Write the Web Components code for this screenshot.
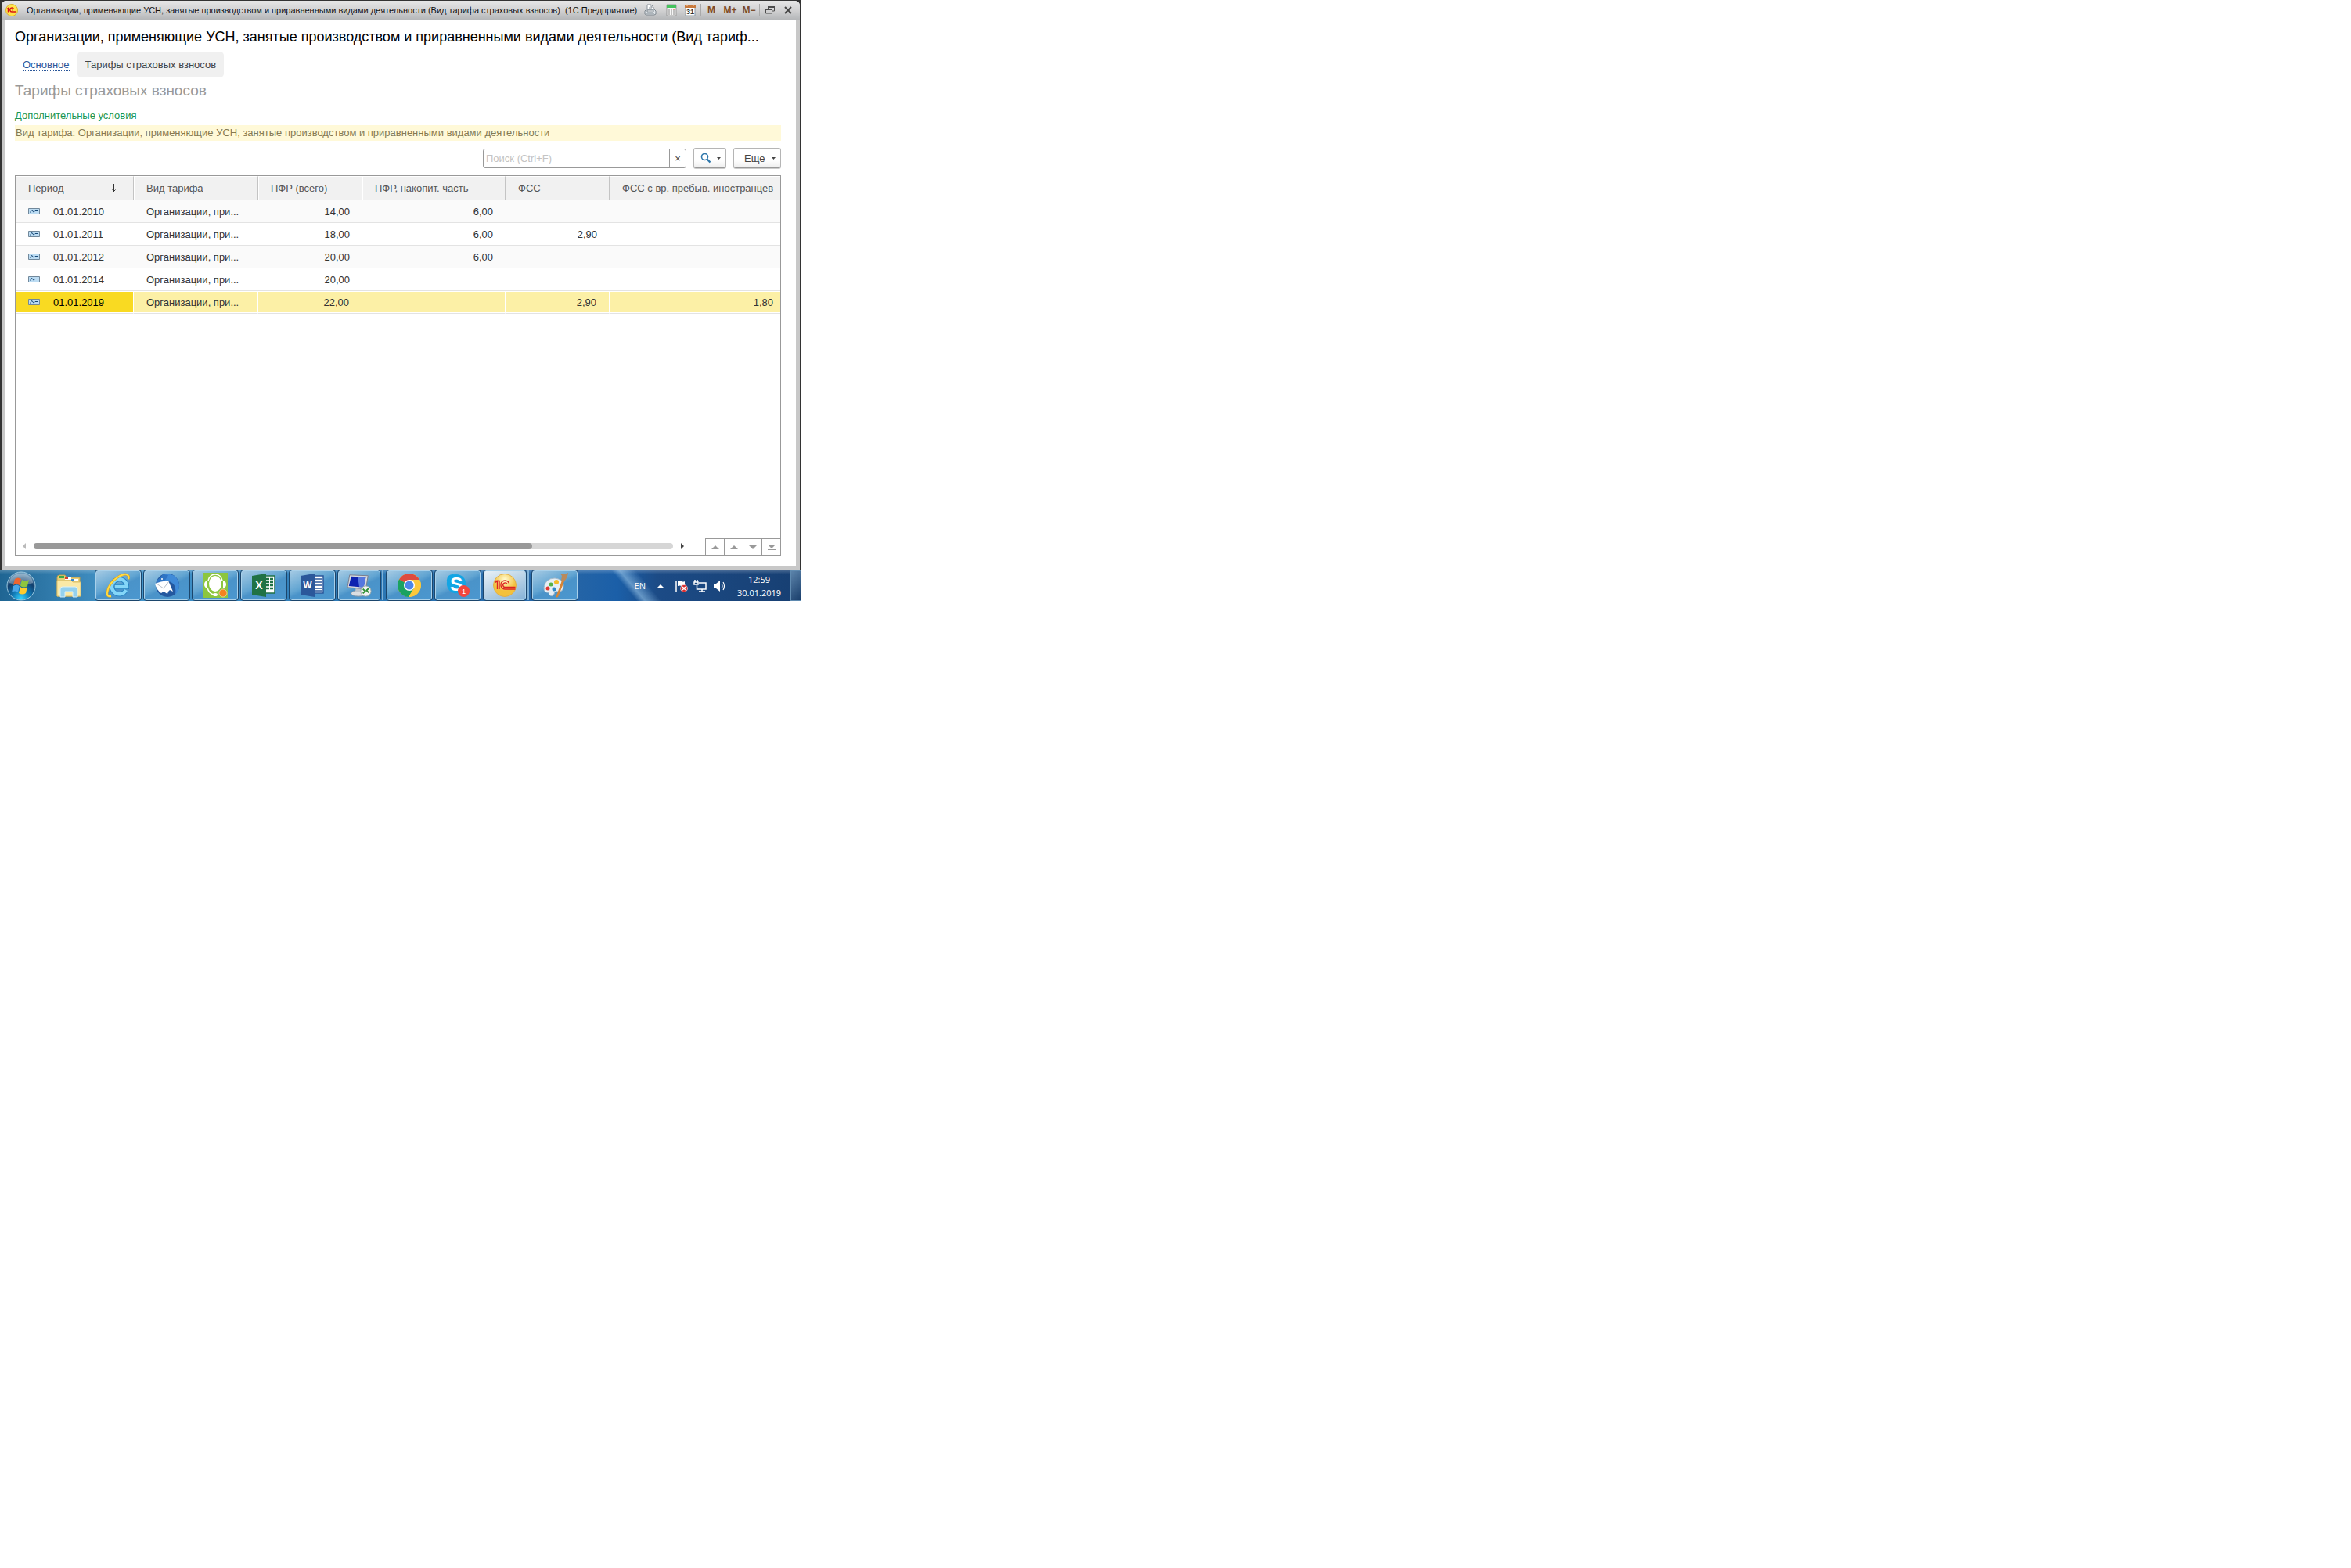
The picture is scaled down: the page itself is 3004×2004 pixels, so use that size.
<!DOCTYPE html>
<html lang="ru">
<head>
<meta charset="utf-8">
<title>Тарифы страховых взносов</title>
<style>
  body {
    margin: 0;
    background: #fff;
    font-family: "Liberation Sans", Arial, sans-serif;
    font-size: 13px;
    color: #333;
  }
</style>
</head>
<body>
<desk-top>
  <app-window caption="Организации, применяющие УСН, занятые производством и приравненными видами деятельности (Вид тарифа страховых взносов)  (1С:Предприятие)">
    <tariff-form></tariff-form>
  </app-window>
  <task-bar slot="taskbar">
    <task-button icon="ie" label="Internet Explorer"></task-button>
    <task-button icon="mail" label="Thunderbird"></task-button>
    <task-button icon="headset" label="Agent"></task-button>
    <task-button icon="excel" label="Excel"></task-button>
    <task-button icon="word" label="Word"></task-button>
    <task-button icon="remote" label="Remote Desktop" stacked></task-button>
    <task-button icon="chrome" label="Chrome"></task-button>
    <task-button icon="skype" label="Skype"></task-button>
    <task-button icon="onec" label="1C" active stacked></task-button>
    <task-button icon="paint" label="Paint"></task-button>
    <system-tray slot="tray"></system-tray>
  </task-bar>
</desk-top>

<script>
const icons = {
  logo: `<svg width="16" height="16" viewBox="0 0 16 16"><circle cx="8" cy="8" r="7.5" fill="#ffe34d" stroke="#d9b52c"/><path d="M2 6.500 3.500 5.500V10.500M4 5v5.500M10.500 6.500A2.500 2.500 0 1 0 8.500 10H13.500M10 8H8.500" fill="none" stroke="#d81414" stroke-width="1.5"/></svg>`,
  printer: `<svg width="16" height="16" viewBox="0 0 16 16"><path d="M4 8V1h5l3 3v4" fill="#fff" stroke="#8b939b"/><path d="M9 1v3h3M6 5h4" fill="none" stroke="#8b939b"/><path d="M1 9l2-2h10l2 2v4l-2 1H3l-2-1z" fill="#dfe4e8" stroke="#7d868e"/><path d="M4 8h8v2H4zM3 12h10" fill="#fff" stroke="#7d868e"/></svg>`,
  calc: `<svg width="14" height="16" viewBox="0 0 14 16"><path d="M1 1h12v14H1z" fill="#f5f5f5" stroke="#999"/><path d="M1 1h12v4H1z" fill="#45c25c"/><path d="M3 7h2M6 7h2M3 9h2M6 9h2M3 11h2M6 11h2M3 13h2M6 13h2M9 9h2M9 11h2M9 13h2" stroke="#888"/><path d="M9 7h2" stroke="#d33"/></svg>`,
  calendar: `<svg width="14" height="16" viewBox="0 0 14 16"><path d="M1 3h12v12H1z" fill="#fff" stroke="#8f9aa5"/><path d="M0 1h14v4H0z" fill="#c8793c"/><path d="M3 0v3M11 0v3" stroke="#f3d6bd" stroke-width="1"/><text x="7" y="13" text-anchor="middle" font-size="9" fill="#333" font-family="Liberation Sans">31</text></svg>`,
  restore: `<svg width="12" height="12" viewBox="0 0 12 12" fill="none" stroke="#4c4c4c"><path d="M3.5 4V2h8v5H9M.5 5h8v5h-8z"/><path d="M3 2h9M0 5h9" stroke-width="2"/></svg>`,
  close: `<svg width="10" height="10" viewBox="0 0 10 10"><path d="M1 1l8 8M9 1 1 9" stroke="#444" stroke-width="2"/></svg>`,
  lens: `<svg width="14" height="14" viewBox="0 0 14 14" fill="none" stroke="#2f77ab"><circle cx="5.5" cy="5.5" r="4" stroke-width="1.6"/><path d="M8.5 8.5 12.5 12.5" stroke-width="2.4"/></svg>`,
  caret: `<svg width="5" height="4" viewBox="0 0 5 4"><path d="M0 1h5L2.500 4z" fill="#444"/></svg>`,
  record: `<svg width="15" height="8" viewBox="0 0 15 8"><path d="M.5.5h14v7H.5z" fill="#bcdcf3" stroke="#71889b"/><path d="M2.500 5.500 4 3Q5 1.500 6 4T8 4.500L9 3.500H12" fill="none" stroke="#174a78"/></svg>`,
  sort: `<svg width="7" height="11" viewBox="0 0 7 11"><path d="M3.500 0v10M1.500 7.500 3.500 9.500 5.500 7.500" fill="none" stroke="#333"/></svg>`,
  first: `<svg width="10" height="7" viewBox="0 0 10 7" fill="#999"><path d="M0 0h10v1H0zM5 1l5 5H0z"/></svg>`,
  up: `<svg width="10" height="5" viewBox="0 0 10 5"><path d="M5 0l5 5H0z" fill="#999"/></svg>`,
  down: `<svg width="10" height="5" viewBox="0 0 10 5"><path d="M0 0h10L5 5z" fill="#999"/></svg>`,
  last: `<svg width="10" height="7" viewBox="0 0 10 7" fill="#999"><path d="M0 0h10L5 5zM0 6h10v1H0z"/></svg>`,
  start: `<svg width="38" height="38" viewBox="0 0 38 38"><defs><radialGradient id="o" cx=".5" cy=".95" r=".9"><stop offset="0" stop-color="#35d4ff"/><stop offset=".35" stop-color="#1179b5"/><stop offset=".7" stop-color="#123f6d"/><stop offset="1" stop-color="#6f9dbd"/></radialGradient></defs><circle cx="19" cy="19" r="18" fill="url(#o)" stroke="#9cc9e0"/><path d="M4 15a15 12 0 0 1 30 0q-15 6-30 0" fill="#fff" opacity=".3"/><path d="M11 10q4-3 8 0l-2 8q-4-3-8 0z" fill="#f0652f"/><path d="M20 11q4 3 9 0l-2 8q-4 3-9 0z" fill="#8fc63e"/><path d="M9 19q4-3 8 0l-2 8q-4-3-8 0z" fill="#4ba6e8"/><path d="M18 20q4 3 9 0l-2 8q-4 3-9 0z" fill="#ffcb2e"/></svg>`,
  folder: `<svg width="34" height="32" viewBox="0 0 34 32"><path d="M2 5q0-3 3-3h7l2 3h17v24H2z" fill="#e8cf78" stroke="#b99c4a"/><path d="M5 3h6v3H5z" fill="#3ca84a"/><path d="M12 5h8v3h-8z" fill="#fff"/><path d="M12 5h4v2h-4z" fill="#d5402e"/><path d="M20 7h9v3h-9z" fill="#fff"/><path d="M20 7h4v2h-4z" fill="#3588d0"/><path d="M2 9h18l2 2h10v18H2z" fill="#fae9a6" stroke="#d9bf6c"/><path d="M6 30V20q0-3 3-3h16q3 0 3 3v10h-6v-7H12v7z" fill="#8fd0f2" stroke="#d9f2ff" opacity=".95"/></svg>`,
  ie: `<svg width="32" height="32" viewBox="0 0 32 32"><path d="M26 22A9.500 9.500 0 1 1 27 18H12" fill="none" stroke="#1e7dbd" stroke-width="6"/><path d="M26 22A9.500 9.500 0 1 1 27 18H12" fill="none" stroke="#84d6f8" stroke-width="4.500"/><path d="M7 30Q1 31 2 25 4 13 15 6 26-1 29 4q1 2 0 4" fill="none" stroke="#e3a51b" stroke-width="3"/><path d="M7 30Q1 31 2 25 4 13 15 6 26-1 29 4q1 2 0 4" fill="none" stroke="#ffdc43" stroke-width="1.800"/></svg>`,
  mail: `<svg width="34" height="34" viewBox="0 0 34 34"><circle cx="18" cy="17" r="15" fill="#24589f"/><path d="M9 8q5-7 13-5 9 2 11 13 0 8-5 13 2-14-8-17L6 15q0-4 3-7z" fill="#3f8ad8"/><path d="M12 3q-4 6-8 7l1 4 6-1q5-2 8-9z" fill="#2f74c4"/><path d="M2 15q7-3 17-4l6 14-4-2q-3 2-3 5l-5-3-3 2q-6-4-8-12z" fill="#fff"/><path d="M4 15l9 6 7-9" fill="none" stroke="#b5bec8"/><circle cx="11" cy="9" r="1" fill="#fff"/></svg>`,
  headset: `<svg width="32" height="32" viewBox="0 0 32 32"><path d="M0 0h32v32H0z" fill="#8cc63f"/><ellipse cx="16" cy="14" rx="8" ry="10" fill="#fff"/><path d="M6 10q-4 1-4 5t4 5zM26 10q4 1 4 5t-4 5z" fill="#fff"/><path d="M7 10Q9 2 16 2t9 8M6 19q2 9 10 9" fill="none" stroke="#fff" stroke-width="1.500"/><ellipse cx="16" cy="28" rx="3" ry="2" fill="#fff"/><circle cx="26" cy="26" r="5" fill="#f58220" stroke="#fff" stroke-width=".500"/></svg>`,
  excel: `<svg width="32" height="32" viewBox="0 0 32 32"><path d="M17 4h13v22H17z" fill="#fff" stroke="#207245" stroke-width="1.500"/><path d="M18 8h5M18 12h5M18 16h5M18 20h5M24 8h4M24 12h4M24 16h4M24 20h4" stroke="#207245" stroke-width="2.500"/><path d="M1 4 19 1v30L1 28z" fill="#207245"/><text x="10" y="21" text-anchor="middle" font-size="14" font-weight="bold" fill="#fff" font-family="Liberation Sans">X</text></svg>`,
  word: `<svg width="32" height="32" viewBox="0 0 32 32"><path d="M17 4h13v22H17z" fill="#fff" stroke="#2b579a" stroke-width="1.500"/><path d="M19 8h9M19 12h9M19 16h9M19 20h9M19 23h9" stroke="#2b579a" stroke-width="1.500"/><path d="M1 4 19 1v30L1 28z" fill="#2b579a"/><text x="10" y="20" text-anchor="middle" font-size="12" font-weight="bold" fill="#fff" font-family="Liberation Sans">W</text></svg>`,
  remote: `<svg width="32" height="32" viewBox="0 0 34 34"><ellipse cx="16" cy="28" rx="10" ry="4" fill="#d9dee2" stroke="#8d99a3"/><path d="M12 21h7v5h-7z" fill="#bcc5cc"/><path d="M4 3l25 1-3 18-25-2z" fill="#d5dbe0" stroke="#778"/><path d="M6 5l20 1-3 14-20-2z" fill="#0d22b0"/><path d="M15 5l11 1-3 14-6-1z" fill="#6d94ef" opacity=".75"/><circle cx="26" cy="25" r="7" fill="#f1f3f3" stroke="#9aa"/><path d="M22 22l3 3-3 3M30 21l-3 3 3 3" fill="none" stroke="#2f8f34" stroke-width="2"/></svg>`,
  chrome: `<svg width="30" height="30" viewBox="0 0 30 30"><circle cx="15" cy="15" r="15" fill="#fbc83c"/><path d="M15 15 2 7.500A15 15 0 0 1 28 8H15z" fill="#dd4b3e"/><path d="M2 7.500A15 15 0 0 0 14 30l7-11.500-6-3.500z" fill="#1aa260"/><path d="M15 8h13a15 15 0 0 1-14 22l7-11z" fill="#fbc83c"/><circle cx="15" cy="15" r="7" fill="#fff"/><circle cx="15" cy="15" r="5.500" fill="#4a86e8"/></svg>`,
  skype: `<svg width="32" height="32" viewBox="0 0 34 34"><circle cx="10" cy="10" r="8" fill="#12a5e4"/><circle cx="15" cy="15" r="13" fill="#12a5e4"/><circle cx="21" cy="21" r="8" fill="#12a5e4"/><text x="15" y="24" text-anchor="middle" font-size="26" font-weight="bold" fill="#fff" font-family="Liberation Sans">S</text><circle cx="25" cy="25" r="8" fill="#f2453d"/><text x="25" y="29" text-anchor="middle" font-size="10" fill="#fff" font-family="Liberation Sans">1</text></svg>`,
  onec: `<svg width="32" height="32" viewBox="0 0 32 32"><defs><radialGradient id="g" cy=".25"><stop offset="0" stop-color="#fffbd0"/><stop offset="1" stop-color="#f3c13c"/></radialGradient></defs><circle cx="16" cy="16" r="14.500" fill="url(#g)" stroke="#e0b04a"/><path d="M4 12.500 6.500 10.500V21M4 10.500H9V21M21.500 13.500A5.500 5.500 0 1 0 17 21H29.500M19 14.500A2.800 2.800 0 1 0 17 18.500H29.500" fill="none" stroke="#dc2323" stroke-width="1.400"/></svg>`,
  paint: `<svg width="34" height="34" viewBox="0 0 34 34"><path d="M3 20Q5 8 17 8q10 1 11 9 0 9-7 8-4-1-5 3-1 4-5 2-2-1-2-4-6 1-6-6z" fill="#e5eef5" stroke="#a9bccb"/><circle cx="8" cy="21" r="2.500" fill="#e0352f"/><circle cx="12" cy="16" r="2.500" fill="#54b148"/><circle cx="19" cy="13" r="3" fill="#f3bb2a"/><circle cx="16" cy="22" r="2.500" fill="#2f87c8"/><path d="M18 33 26 11l3 1-8 20z" fill="#d68535"/><path d="M25 11l1-6-2-3q5 2 10-1-1 7-5 11z" fill="#b98a5c"/></svg>`,
  flag: `<svg width="18" height="18" viewBox="0 0 18 18"><path d="M2 2v14" stroke="#fff" stroke-width="1.500"/><path d="M4 3q3-1 5 0t4 0v6q-2 1-4 0T4 9z" fill="#fff"/><circle cx="12" cy="12" r="4.500" fill="#d92a2a" stroke="#fff" stroke-width=".600"/><path d="M10 10l4 4M14 10l-4 4" stroke="#fff" stroke-width="1.600"/></svg>`,
  network: `<svg width="18" height="18" viewBox="0 0 18 18" fill="none" stroke="#fff" stroke-width="1.500"><path d="M7 5h9v8H4.500V8M7 16h8M11 13v3M2 1v3M5 1v3M1 4h5v3H1z"/></svg>`,
  sound: `<svg width="18" height="18" viewBox="0 0 18 18"><path d="M2 6h3l5-4v14l-5-4H2z" fill="#fff"/><path d="M12 6q2 3 0 6M14 4q3 5 0 10" fill="none" stroke="#fff" stroke-width="1.200"/></svg>`
}

/**
 * Fills an open shadow root with the given markup.
 */
function render (host, html) {
  const template = document.createElement('template')
  template.innerHTML = html
  host.attachShadow({ mode: 'open' }).appendChild(template.content.cloneNode(true))
}

customElements.define('desk-top',
  class extends HTMLElement {
    constructor () {
      super()
      render(this, `
        <style>
          :host {
            display: flex;
            flex-direction: column;
            max-width: 1024px;
            min-height: 768px;
            background: #333;
          }
          ::slotted(app-window) { flex: 1; }
        </style>
        <slot></slot>
        <slot name="taskbar"></slot>
      `)
    }
  }
)

customElements.define('app-window',
  class extends HTMLElement {
    constructor () {
      super()
      render(this, `
        <style>
          :host {
            display: flex;
            flex-direction: column;
            margin: 1px 2px 0;
            padding: 0 5px 5px;
            background: #c8c8c8;
            border-radius: 6px 6px 0 0;
          }
          header {
            display: flex;
            align-items: center;
            height: 24px;
            margin: 0 -5px;
            padding: 0 4px 0 5px;
            background: linear-gradient(#e6e6e6, #d2d2d3 50%, #b5b7b9);
            border-radius: 6px 6px 0 0;
            color: #111;
          }
          .caption {
            flex: 1;
            margin-left: 11px;
            font-size: 11px;
            white-space: pre;
          }
          button {
            display: flex;
            flex-shrink: 0;
            align-items: center;
            justify-content: center;
            height: 20px;
            width: 24px;
            padding: 0;
            border: 0;
            background: none;
            color: #7d4a26;
            font: bold 12px "Liberation Sans", sans-serif;
          }
          .window { width: 23px; }
          .sep { width: 1px; height: 16px; margin: 0 1px; background: #a9a9a9; }
          main { display: flex; flex: 1; background: #fff; }
          ::slotted(*) { flex: 1; }
        </style>
        <header>
          ${icons.logo}
          <span class="caption"></span>
          <button aria-label="Печать">${icons.printer}</button>
          <span class="sep"></span>
          <button aria-label="Калькулятор">${icons.calc}</button>
          <button aria-label="Календарь">${icons.calendar}</button>
          <span class="sep"></span>
          <button>M</button>
          <button>M+</button>
          <button>M−</button>
          <span class="sep"></span>
          <button class="window" aria-label="Восстановить">${icons.restore}</button>
          <button class="window" aria-label="Закрыть">${icons.close}</button>
        </header>
        <main><slot></slot></main>
      `)
    }

    connectedCallback () {
      this.shadowRoot.querySelector('.caption').textContent = this.getAttribute('caption')
    }
  }
)

customElements.define('tariff-form',
  class extends HTMLElement {
    constructor () {
      super()
      render(this, `
        <style>
          :host {
            display: flex;
            flex-direction: column;
            min-width: 0;
            padding: 11px 19px 13px 12px;
          }
          h1, h2 { margin: 0; font-weight: normal; white-space: nowrap; }
          h1 { font-size: 18px; line-height: 22px; color: #000; margin-right: -19px; }
          h2 { margin-top: 5px; font-size: 19px; line-height: 24px; color: #999; }
          nav { display: flex; margin-top: 8px; line-height: 33px; }
          nav a { padding: 0 10px; color: #444; text-decoration: none; border-radius: 5px; }
          nav a span { border-bottom: 1px dotted #2b579a; color: #2b579a; }
          nav a.current { background: #f0f0f0; }
          .extra { margin-top: 10px; line-height: 20px; color: #1a9650; }
          .filter { margin-top: 2px; padding-left: 1px; line-height: 20px; background: #fff9d8; color: #857a52; }
          .tools { display: flex; justify-content: flex-end; align-items: center; gap: 9px; margin: 9px 0; }
          .search { display: flex; width: 258px; height: 23px; border: 1px solid #999; border-radius: 3px; }
          .search input {
            flex: 1;
            min-width: 0;
            padding: 0 3px;
            border: 0;
            outline: 0;
            background: none;
            font: inherit;
          }
          .search input::placeholder { color: #c4c4c4; }
          button { font: inherit; color: #444; background: #fff; }
          .search button { width: 21px; padding: 0; border: 0; border-left: 1px solid #999; background: none; }
          .tool {
            display: flex;
            align-items: center;
            justify-content: space-between;
            height: 26px;
            padding: 0 6px 0 8px;
            border: 1px solid #b5b5b5;
            border-bottom-color: #999;
            border-radius: 3px;
            background: linear-gradient(#fff 60%, #eee);
            box-shadow: 0 1px #ccc;
          }
          .find { width: 42px; }
          .more { width: 61px; padding-left: 13px; }
          data-grid { flex: 1; }
        </style>
        <h1>Организации, применяющие УСН, занятые производством и приравненными видами деятельности (Вид тариф...</h1>
        <nav>
          <a href="#main"><span>Основное</span></a>
          <a href="#rates" class="current">Тарифы страховых взносов</a>
        </nav>
        <h2>Тарифы страховых взносов</h2>
        <div class="extra">Дополнительные условия</div>
        <div class="filter">Вид тарифа: Организации, применяющие УСН, занятые производством и приравненными видами деятельности</div>
        <div class="tools">
          <div class="search">
            <input type="text" placeholder="Поиск (Ctrl+F)" aria-label="Поиск">
            <button aria-label="Очистить">×</button>
          </div>
          <button class="tool find" aria-label="Найти">${icons.lens}${icons.caret}</button>
          <button class="tool more">Еще ${icons.caret}</button>
        </div>
        <data-grid></data-grid>
      `)
    }
  }
)

customElements.define('data-grid',
  class extends HTMLElement {
    #rows = [
      ['01.01.2010', '14,00', '6,00', '', ''],
      ['01.01.2011', '18,00', '6,00', '2,90', ''],
      ['01.01.2012', '20,00', '6,00', '', ''],
      ['01.01.2014', '20,00', '', '', ''],
      ['01.01.2019', '22,00', '', '2,90', '1,80']
    ]

    constructor () {
      super()
      render(this, `
        <style>
          :host {
            display: flex;
            flex-direction: column;
            justify-content: space-between;
            border: 1px solid #999;
          }
          table {
            width: 100%;
            table-layout: fixed;
            border-collapse: separate;
            border-spacing: 0;
          }
          th, td {
            box-sizing: border-box;
            padding: 0 16px;
            font-weight: normal;
            white-space: nowrap;
            text-align: right;
          }
          th {
            height: 31px;
            text-align: left;
            background: #f1f1f1;
            color: #555;
            border: 1px solid #fff;
            border-bottom-color: #c4c4c4;
            border-right-color: #c4c4c4;
            padding: 0 15px 1px;
          }
          th:last-child { border-right: 0; padding-right: 0; }
          td { height: 29px; border-bottom: 1px solid #e3e3e3; }
          td:nth-child(2) { text-align: left; }
          td:last-child { padding-right: 9px; }
          tr:nth-child(odd) td { background: #fafafa; }
          tr.selected td {
            background: #fcf0a6;
            border-right: 1px solid #fff;
            box-shadow: inset 0 1px #fff, inset 0 -1px #fff;
          }
          tr.selected td:first-child { background: #f9da22; color: #000; }
          tr.selected td:last-child { border-right: 0; }
          .cell { display: flex; align-items: center; gap: 17px; }
          .sorted { display: flex; justify-content: space-between; align-items: center; padding-right: 6px; }
          footer { display: flex; align-items: flex-end; justify-content: space-between; }
          .bar { display: flex; flex: 1; align-items: center; gap: 10px; height: 8px; margin: 0 27px 7px 9px; }
          .arrow { border: 4px solid transparent; }
          .left { border-left: 0; border-right-color: #bbb; }
          .right { border-right: 0; border-left-color: #444; }
          .track { flex: 1; height: 8px; border-radius: 4px; background: #d6d6d6; }
          .thumb { width: 78%; height: 8px; border-radius: 4px; background: #999; }
          .nav { display: flex; border-top: 1px solid #999; }
          .nav button {
            display: flex;
            align-items: center;
            justify-content: center;
            width: 24px;
            height: 20px;
            padding: 0;
            border: 0;
            border-left: 1px solid #999;
            background: #fff;
          }
        </style>
        <table>
          <colgroup>
            <col style="width: 151px"><col style="width: 159px"><col style="width: 133px">
            <col style="width: 183px"><col style="width: 133px"><col>
          </colgroup>
          <thead>
            <tr>
              <th><div class="sorted">Период ${icons.sort}</div></th>
              <th>Вид тарифа</th>
              <th>ПФР (всего)</th>
              <th>ПФР, накопит. часть</th>
              <th>ФСС</th>
              <th>ФСС с вр. пребыв. иностранцев</th>
            </tr>
          </thead>
          <tbody></tbody>
        </table>
        <footer>
          <div class="bar">
            <span class="arrow left"></span>
            <div class="track"><div class="thumb"></div></div>
            <span class="arrow right"></span>
          </div>
          <div class="nav">
            <button aria-label="В начало">${icons.first}</button>
            <button aria-label="Вверх">${icons.up}</button>
            <button aria-label="Вниз">${icons.down}</button>
            <button aria-label="В конец">${icons.last}</button>
          </div>
        </footer>
      `)
    }

    connectedCallback () {
      this.shadowRoot.querySelector('tbody').innerHTML = this.#rows.map(([date, ...sums], i) => `
        <tr${i === this.#rows.length - 1 ? ' class="selected"' : ''}>
          <td><div class="cell">${icons.record}<span>${date}</span></div></td>
          <td>Организации, при...</td>
          ${sums.map(sum => `<td>${sum}</td>`).join('')}
        </tr>`).join('')
    }
  }
)

customElements.define('task-bar',
  class extends HTMLElement {
    constructor () {
      super()
      render(this, `
        <style>
          :host {
            display: flex;
            box-sizing: border-box;
            height: 40px;
            overflow: hidden;
            border-top: 1px solid #17344f;
            background:
              linear-gradient(rgba(255, 255, 255, .2), transparent 12%),
              linear-gradient(50deg, transparent 77%, rgba(150, 195, 230, .6) 78%, transparent 80%),
              linear-gradient(90deg, #1f6593, #3a86b8 10%, #4597cc 15%, #2c78b5 45%, #2464a6 72%, #1b5fa8 77%, #1c4b86 82%, #173f72);
          }
          .start, .folder {
            display: flex;
            align-items: center;
            justify-content: center;
            padding: 0;
            border: 0;
            background: none;
          }
          .start { width: 54px; }
          .folder { width: 68px; }
          .tasks { display: flex; flex: 1; gap: 4px; }
        </style>
        <button class="start" aria-label="Пуск">${icons.start}</button>
        <button class="folder" aria-label="Проводник">${icons.folder}</button>
        <div class="tasks"><slot></slot></div>
        <slot name="tray"></slot>
      `)
    }
  }
)

customElements.define('task-button',
  class extends HTMLElement {
    constructor () {
      super()
      render(this, `
        <style>
          :host { display: flex; height: 38px; width: 58px; }
          :host([stacked]) { border-right: 2px solid #7fb2d8; width: 56px; }
          button {
            display: flex;
            flex: 1;
            align-items: center;
            justify-content: center;
            padding: 0;
            border: 1px solid #a8d0ea;
            outline: 1px solid #1c466c;
            border-radius: 3px;
            background: linear-gradient(155deg, #a3c9e3, #62a5d2 45%, #4a93c9 55%, #4b97cf);
          }
          :host([stacked]) button { margin-right: 2px; }
          :host([active]) button { background: linear-gradient(155deg, #e9f1f7, #b8d2e6 50%, #86b2d6); }
        </style>
        <button></button>
      `)
    }

    connectedCallback () {
      const button = this.shadowRoot.querySelector('button')
      button.innerHTML = icons[this.getAttribute('icon')]
      button.setAttribute('aria-label', this.getAttribute('label'))
    }
  }
)

customElements.define('system-tray',
  class extends HTMLElement {
    constructor () {
      super()
      render(this, `
        <style>
          :host {
            display: flex;
            align-items: center;
            gap: 6px;
            color: #fff;
            font-family: "Open Sans", sans-serif;
            font-size: 11px;
          }
          .lang { margin-right: 9px; }
          .up { margin-right: 8px; border: 4px solid transparent; border-top: 0; border-bottom-color: #fff; }
          .clock { width: 62px; margin: 0 3px 0 5px; text-align: center; line-height: 17px; }
          .show { width: 14px; height: 39px; padding: 0; border: 1px solid #5f8ab0; background: linear-gradient(135deg, #5b83aa, #1a3f6c); }
        </style>
        <span class="lang">EN</span>
        <span class="up"></span>
        ${icons.flag}
        ${icons.network}
        ${icons.sound}
        <div class="clock"><div>12:59</div><div>30.01.2019</div></div>
        <button class="show" aria-label="Свернуть все окна"></button>
      `)
    }
  }
)
</script>
</body>
</html>
